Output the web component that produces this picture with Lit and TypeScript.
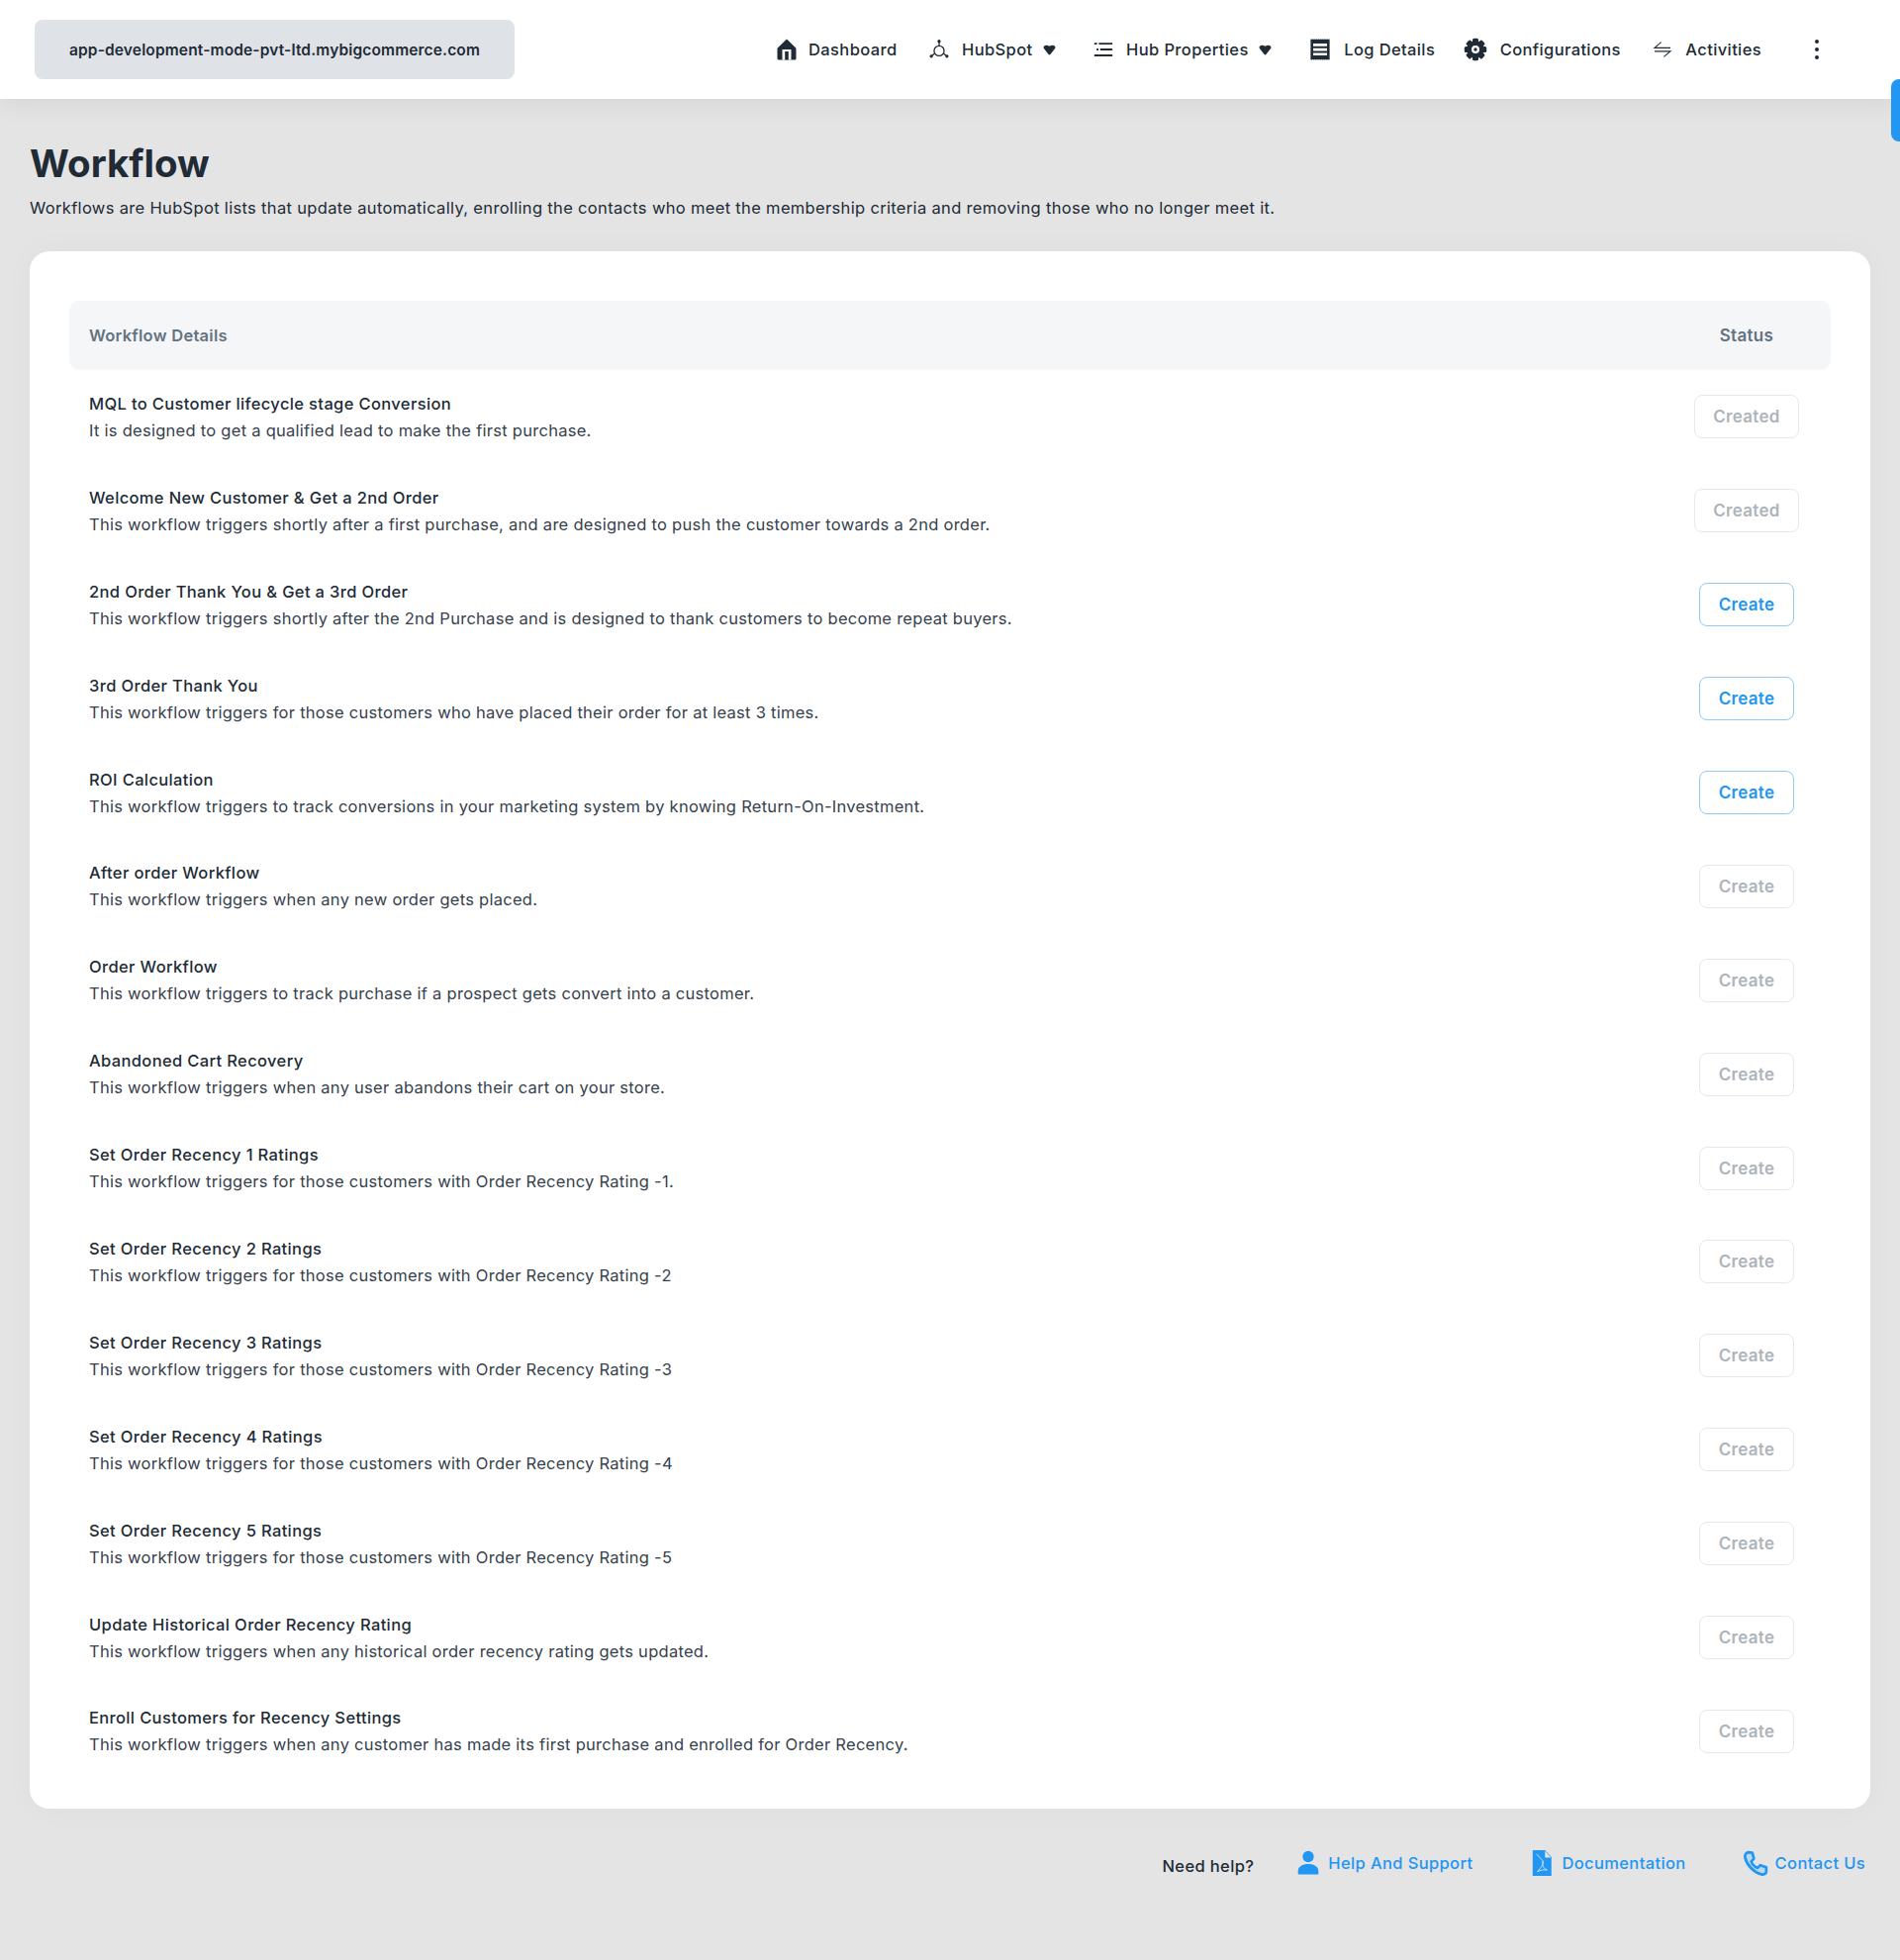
import { LitElement, html, css, svg } from "lit";
import { customElement } from "lit/decorators.js";

type Row = { t: string; d: string; s: "created" | "active" | "off" };
const rows: Row[] = [
  { t: "MQL to Customer lifecycle stage Conversion", d: "It is designed to get a qualified lead to make the first purchase.", s: "created" },
  { t: "Welcome New Customer & Get a 2nd Order", d: "This workflow triggers shortly after a first purchase, and are designed to push the customer towards a 2nd order.", s: "created" },
  { t: "2nd Order Thank You & Get a 3rd Order", d: "This workflow triggers shortly after the 2nd Purchase and is designed to thank customers to become repeat buyers.", s: "active" },
  { t: "3rd Order Thank You", d: "This workflow triggers for those customers who have placed their order for at least 3 times.", s: "active" },
  { t: "ROI Calculation", d: "This workflow triggers to track conversions in your marketing system by knowing Return-On-Investment.", s: "active" },
  { t: "After order Workflow", d: "This workflow triggers when any new order gets placed.", s: "off" },
  { t: "Order Workflow", d: "This workflow triggers to track purchase if a prospect gets convert into a customer.", s: "off" },
  { t: "Abandoned Cart Recovery", d: "This workflow triggers when any user abandons their cart on your store.", s: "off" },
  { t: "Set Order Recency 1 Ratings", d: "This workflow triggers for those customers with Order Recency Rating -1.", s: "off" },
  { t: "Set Order Recency 2 Ratings", d: "This workflow triggers for those customers with Order Recency Rating -2", s: "off" },
  { t: "Set Order Recency 3 Ratings", d: "This workflow triggers for those customers with Order Recency Rating -3", s: "off" },
  { t: "Set Order Recency 4 Ratings", d: "This workflow triggers for those customers with Order Recency Rating -4", s: "off" },
  { t: "Set Order Recency 5 Ratings", d: "This workflow triggers for those customers with Order Recency Rating -5", s: "off" },
  { t: "Update Historical Order Recency Rating", d: "This workflow triggers when any historical order recency rating gets updated.", s: "off" },
  { t: "Enroll Customers for Recency Settings", d: "This workflow triggers when any customer has made its first purchase and enrolled for Order Recency.", s: "off" },
];

const D = "#212b36";
const ico = (size: number, body: unknown) => html`<svg class="ico" width=${size} height=${size} viewBox="0 0 24 24">${body}</svg>`;
const home = ico(24, svg`<path fill="${D}" d="M12 1.500 20.500 9.800a1.800 1.800 0 0 1 1 1.600V21a1.500 1.500 0 0 1-1.500 1.500H4A1.500 1.500 0 0 1 2.500 21V11.400a1.800 1.800 0 0 1 1-1.600z"/><path fill="#fff" d="M7.500 12h9v10.500h-9z"/><path fill="${D}" d="M10.200 14h3.600v8.500h-3.600z"/>`);
const hub = ico(22, svg`<g fill="none" stroke="${D}" stroke-width="1.400"><circle cx="12" cy="13.500" r="5.500"/><path d="M12 3.500V8M7.200 16.300 3.800 19M16.800 16.300 20.200 19"/></g><circle cx="12" cy="3" r="1.800" fill="${D}"/><circle cx="3.400" cy="19.400" r="1.800" fill="${D}"/><circle cx="20.600" cy="19.400" r="1.800" fill="${D}"/>`);
const list = ico(22, svg`<g stroke="${D}" stroke-width="2"><path d="M2 5.500h3M7 5.500h15M4.500 12h2M8.500 12h13.500M2 18.500h20"/></g>`);
const logIcon = ico(24, svg`<path fill="${D}" d="M2.200 1.500h19.600v21H2.200z"/><path fill="none" stroke="#fff" stroke-width=".7" stroke-dasharray="1.100 1.100" d="M2.200 1.500h19.600v21H2.200z"/><path fill="#fff" d="M5 6h14v2.700H5zM5 10.700h14v2.700H5zM5 15.400h14v2.700H5z"/>`);
const gearTeeth = [0, 45, 90, 135, 180, 225, 270, 315];
const gear = ico(24, svg`<circle cx="12" cy="12" r="8.700" fill="${D}"/>${gearTeeth.map(a => svg`<rect x="9" y="0.800" width="6" height="5" rx="1.500" fill="${D}" transform="rotate(${a} 12 12)"/>`)}<circle cx="12" cy="12" r="4" fill="#fff"/><circle cx="12" cy="12" r="1.700" fill="${D}"/>`);
const swap = ico(22, svg`<g fill="none" stroke="${D}" stroke-width="1.200"><path d="M10.500 4 3.300 10.200H20.700M3.300 14H20.700L13.500 20"/></g>`);
const caret = html`<svg class="ico caret" width="13" height="11" viewBox="0 0 14 12"><path fill="${D}" d="M2.500 1c1.500-.6 3 0 4.500.8C8.500 1 10 .4 11.500 1c1.800.6 2.500 2 1.600 3.300L8.200 10.600a1.500 1.500 0 0 1-2.400 0L.9 4.300C0 3 .7 1.600 2.500 1z"/></svg>`;
const person = ico(26, svg`<circle cx="12" cy="6" r="5.200" fill="#2196f3"/><path fill="#2196f3" d="M2.500 22.500v-3C2.500 15.500 6.500 13 12 13s9.500 2.500 9.500 6.500v3z"/>`);
const doc = ico(26, svg`<path fill="#2196f3" d="M4.500 0H15l6 6.500V25a1 1 0 0 1-1 1H4.500a1 1 0 0 1-1-1V1a1 1 0 0 1 1-1z"/><path fill="#e4e4e5" d="M15 .8 20.600 7H15z"/><path fill="none" stroke="#e4e4e5" stroke-width=".8" d="M7 3.500 13 10c.8 3-1.500 6-5 10 3-1.500 6-2 9-1.500-3-1-5-4-4-8.500"/>`);
const phone = ico(26, svg`<path fill="#bcd9f2" stroke="#2196f3" stroke-width="2.500" stroke-linejoin="round" d="M5 2 9 2.500 10.500 8 8 10.500c1 3 3 5 6 6l2.500-2.500 5.500 2V20c0 2-2.500 3-4.500 2.500C10 20.500 4 14 2.300 7 1.800 4.800 3 2.500 5 2z"/>`);

@customElement("app-root")
export class AppRoot extends LitElement {
  static styles = css`
    :host { display: block; font-family: Inter, "Liberation Sans", sans-serif; color: #212b36; background: #e4e4e5; min-height: 1981px; position: relative; font-size: 16.5px; letter-spacing: .27px; }
    * { box-sizing: border-box; }
    .ico { display: block; flex: none; }
    header { height: 100px; background: #fff; display: flex; align-items: center; padding: 0 80px 0 35px; box-shadow: 0 4px 24px rgba(0,0,0,.07); position: relative; }
    .store { width: 485px; height: 60px; border-radius: 8px; background: #dfe3e8; display: flex; align-items: center; justify-content: center; font-size: 15.500px; font-weight: 600; color: #212b36; letter-spacing: .15px; }
    nav { margin-left: auto; display: flex; align-items: center; font-weight: 500; letter-spacing: .38px; }
    .item { display: flex; align-items: center; gap: 12.500px; margin-left: 31px; }
    .item.wide { margin-left: 36.500px; }
    .item.tight { margin-left: 29px; }
    .item.home { gap: 10.500px; }
    .item .caret { margin-left: -2px; }
    .dots { width: 8px; display: flex; flex-direction: column; gap: 4px; align-items: center; margin-left: 52px; }
    .dots i { width: 4px; height: 4px; border-radius: 50%; background: #212b36; }
    .tab { position: absolute; right: 0; top: 80px; width: 9px; height: 63px; background: #2196f3; border-radius: 8px 0 0 8px; }
    main { padding: 40px 30px 0; }
    h1 { margin: 0; font-size: 38.500px; line-height: 50px; font-weight: 700; color: #212b36; letter-spacing: 0; }
    .sub { margin: 8px 0 0; line-height: 24px; color: #212b36; letter-spacing: .33px; }
    .card { margin-top: 32px; background: #fff; border-radius: 20px; padding: 50px 40px 30.500px; box-shadow: 0 0 32px rgba(0,0,0,.03); }
    .thead { height: 70px; background: #f4f6f8; border-radius: 10px; display: flex; align-items: center; justify-content: space-between; padding: 0 20px; font-weight: 600; color: #637381; }
    .thead .st { width: 106px; text-align: center; margin-right: 12px; font-size: 17px; letter-spacing: .3px; }
    .row { height: 94.900px; display: flex; align-items: center; justify-content: space-between; padding: 0 32px 0 20px; }
    .t { line-height: 27px; font-weight: 550; color: #212b36; letter-spacing: .36px; }
    .d { line-height: 26px; color: #36414d; }
    .btnwrap { width: 106px; display: flex; justify-content: center; }
    .btn { height: 44px; padding: 0 18.500px; border-radius: 8px; border: 1px solid #e6e8ea; background: #fff; font: 600 17px Inter, "Liberation Sans", sans-serif; letter-spacing: .3px; color: #aeb4bb; display: flex; align-items: center; }
    .btn.active { border-color: #90caf9; color: #2196f3; }
    footer { display: flex; justify-content: flex-end; align-items: center; padding: 42px 35px 0 0; font-weight: 500; letter-spacing: .37px; }
    .need { margin-right: 42px; position: relative; top: 3px; }
    .link { display: flex; align-items: center; gap: 7px; color: #2196f3; margin-left: 57px; }
    .need + .link { margin-left: 0; }
  `;

  render() {
    return html`
      <header>
        <div class="store">app-development-mode-pvt-ltd.mybigcommerce.com</div>
        <nav>
          <div class="item home">${home}<span>Dashboard</span></div>
          <div class="item">${hub}<span>HubSpot</span>${caret}</div>
          <div class="item wide">${list}<span>Hub Properties</span>${caret}</div>
          <div class="item wide">${logIcon}<span>Log Details</span></div>
          <div class="item tight">${gear}<span>Configurations</span></div>
          <div class="item">${swap}<span>Activities</span></div>
          <div class="dots"><i></i><i></i><i></i></div>
        </nav>
      </header>
      <div class="tab"></div>
      <main>
        <h1>Workflow</h1>
        <p class="sub">Workflows are HubSpot lists that update automatically, enrolling the contacts who meet the membership criteria and removing those who no longer meet it.</p>
        <section class="card">
          <div class="thead"><span>Workflow Details</span><span class="st">Status</span></div>
          ${rows.map(r => html`
            <div class="row">
              <div><div class="t">${r.t}</div><div class="d">${r.d}</div></div>
              <div class="btnwrap"><button class="btn ${r.s === "active" ? "active" : ""}">${r.s === "created" ? "Created" : "Create"}</button></div>
            </div>`)}
        </section>
      </main>
      <footer>
        <span class="need">Need help?</span>
        <div class="link">${person}<span>Help And Support</span></div>
        <div class="link">${doc}<span>Documentation</span></div>
        <div class="link">${phone}<span>Contact Us</span></div>
      </footer>
    `;
  }
}
